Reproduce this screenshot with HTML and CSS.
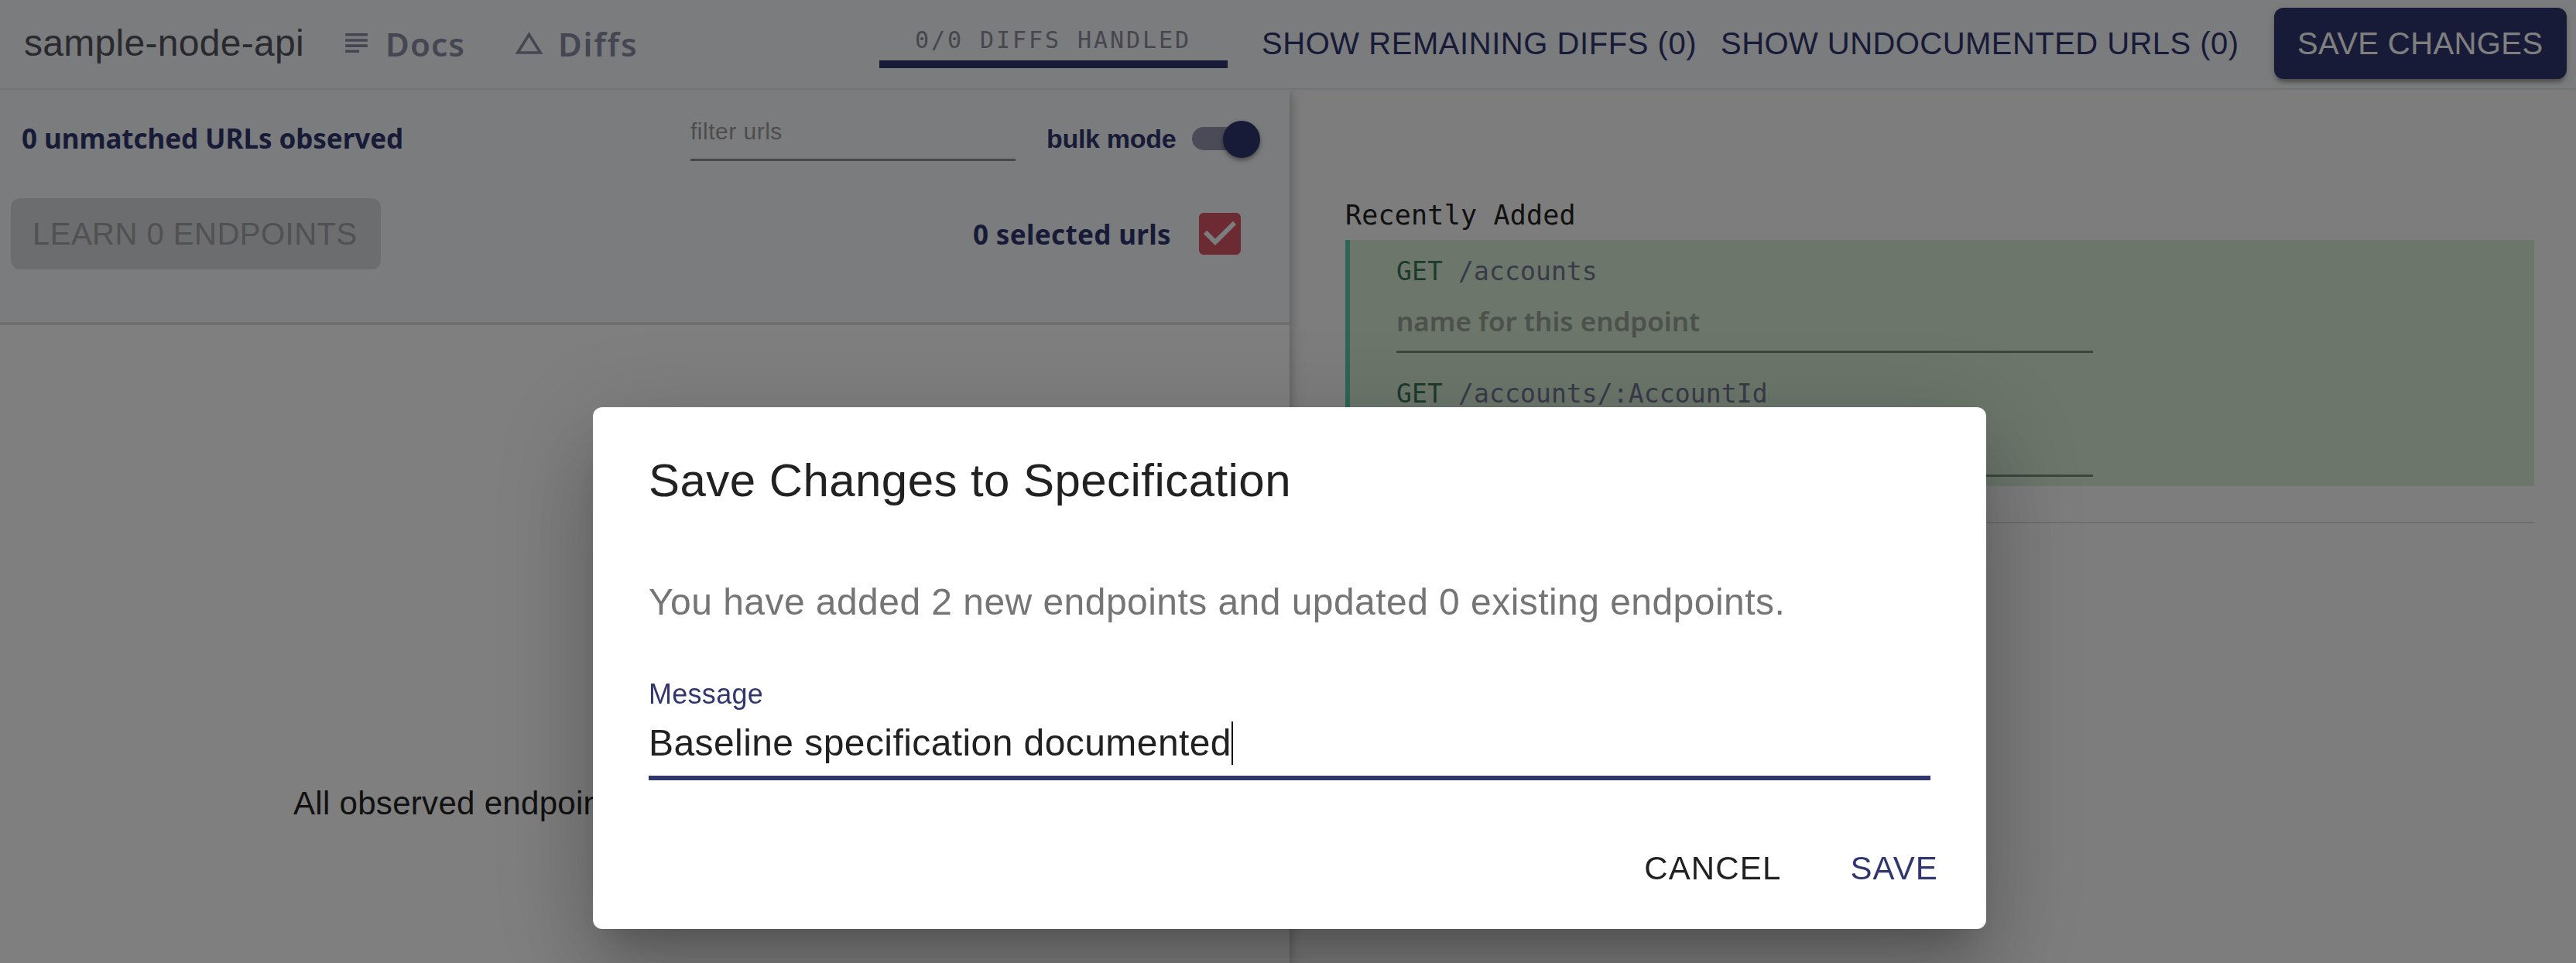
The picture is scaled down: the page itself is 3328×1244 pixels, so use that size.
FILE: index.html
```html
<!DOCTYPE html>
<html lang="en">
<head>
<meta charset="utf-8">
<title>sample-node-api</title>
<link rel="stylesheet" href="styles.css">
</head>
<body>
<div class="app">
  <header class="topbar">
    <div class="project">sample-node-api</div>
    <a class="nav nav-docs">
      <svg class="nav-icon" viewBox="0 0 24 24"><path d="M14 17H4v2h10v-2zm6-8H4v2h16V9zM4 15h16v-2H4v2zM4 5v2h16V5H4z"/></svg>
      <span>Docs</span>
    </a>
    <a class="nav nav-diffs">
      <svg class="nav-icon" viewBox="0 0 24 24"><path d="M12 7.77L18.39 18H5.61L12 7.77M12 4L2 20h20L12 4z"/></svg>
      <span>Diffs</span>
    </a>
    <div class="progress">
      <div class="progress-label">0/0 DIFFS HANDLED</div>
      <div class="progress-bar"></div>
    </div>
    <div class="text-button remaining">SHOW REMAINING DIFFS (0)</div>
    <div class="text-button undocumented">SHOW UNDOCUMENTED URLS (0)</div>
    <div class="save-changes">SAVE CHANGES</div>
  </header>
  <div class="workspace">
    <section class="urls">
      <div class="urls-toolbar">
        <div class="toolbar-row first">
          <div class="heading unmatched">0 unmatched URLs observed</div>
          <div class="filter">filter urls</div>
          <div class="bulk">bulk mode</div>
          <div class="switch"><div class="thumb"></div></div>
        </div>
        <div class="toolbar-row second">
          <div class="learn">LEARN 0 ENDPOINTS</div>
          <div class="heading selected">0 selected urls</div>
          <svg class="checkbox" viewBox="0 0 24 24"><path d="M19 3H5c-1.11 0-2 .9-2 2v14c0 1.1.89 2 2 2h14c1.11 0 2-.9 2-2V5c0-1.1-.89-2-2-2zm-9 14l-5-5 1.41-1.41L10 14.17l7.59-7.59L19 8l-9 9z"/></svg>
        </div>
      </div>
      <p class="empty">All observed endpoints</p>
    </section>
    <section class="changes">
      <h2 class="changes-title">Recently Added</h2>
      <div class="added">
        <div class="endpoint">
          <div class="route"><b>GET</b> /accounts</div>
          <div class="name-field">name for this endpoint</div>
        </div>
        <div class="endpoint">
          <div class="route"><b>GET</b> /accounts/:AccountId</div>
          <div class="name-field"></div>
        </div>
      </div>
      <hr class="divider">
    </section>
  </div>
</div>
<div class="backdrop">
  <div class="dialog">
    <h1 class="dialog-title">Save Changes to Specification</h1>
    <p class="dialog-text">You have added 2 new endpoints and updated 0 existing endpoints.</p>
    <label class="field-label">Message</label>
    <div class="field"><span>Baseline specification documented</span><i class="caret"></i></div>
    <div class="actions"><span class="cancel">CANCEL</span><span class="save">SAVE</span></div>
  </div>
</div>
</body>
</html>
```
FILE: styles.css
```css
* { box-sizing: border-box; }
body { margin: 0; width: 3328px; height: 1244px; overflow: hidden; background: #fafafa; font-family: "Liberation Sans", Arial, sans-serif; color: #222; }
h1, h2, p { margin: 0; font-weight: 400; }
b { font-weight: 400; }
.app { width: 3328px; height: 1244px; white-space: nowrap; }

.topbar { display: flex; align-items: flex-start; height: 116px; background: #f7f8fa; border-bottom: 2px solid #e4e6e9; }
.project { margin-left: 31px; width: 408px; font-size: 48px; line-height: 111px; letter-spacing: .3px; color: #52535f; }
.nav { display: flex; font: 600 42px/114px "Noto Sans", sans-serif; letter-spacing: 1.2px; color: #8b8da6; }
.nav-icon { width: 43px; height: 43px; margin-top: 34px; margin-right: 16px; fill: currentColor; flex: none; }
.nav-docs { width: 223px; }
.nav-diffs { width: 474px; letter-spacing: 1.8px; }
.progress { width: 450px; padding-top: 28px; font: 30px/47px "DejaVu Sans Mono", monospace; letter-spacing: 2.94px; color: #8b8da0; }
.progress-label { height: 50px; padding-left: 46px; }
.progress-bar { height: 10px; background: #31366f; }
.text-button { font-size: 40px; line-height: 112px; letter-spacing: .55px; color: #31366f; }
.remaining { margin-left: 44px; width: 593px; }
.undocumented { width: 715px; letter-spacing: .45px; }
.save-changes { width: 378px; height: 92px; margin-top: 10px; border-radius: 12px; background: #31366f; color: #fff; font-size: 40px; line-height: 92px; letter-spacing: .4px; padding-left: 30px; box-shadow: 0 8px 4px -5px rgba(0,0,0,.2), 0 5px 5px rgba(0,0,0,.14), 0 3px 12px rgba(0,0,0,.12); }

.workspace { display: flex; height: 1128px; }
.urls { width: 1666px; background: #fff; box-shadow: 0 5px 10px rgba(0,0,0,.2), 4px 5px 18px rgba(0,0,0,.12); clip-path: inset(0 -60px 0 0); }
.urls-toolbar { height: 304px; background: #f7f8fa; border-bottom: 4px solid #dfdfdf; }
.toolbar-row { display: flex; align-items: flex-start; }
.first { height: 140px; }
.heading { font: 700 35px/48px "Noto Sans", sans-serif; color: #31366f; }
.unmatched { margin: 39px 0 0 28px; width: 864px; letter-spacing: -.06px; }
.filter { width: 420px; height: 92px; padding-top: 33px; font-size: 30px; line-height: 41px; letter-spacing: .5px; color: #9a9a9c; border-bottom: 3px solid #8f8f91; }
.bulk { margin: 39px 0 0 40px; width: 188px; font-size: 34px; line-height: 48px; font-weight: 700; letter-spacing: -.3px; color: #31366f; }
.switch { width: 82px; height: 30px; margin-top: 48px; border-radius: 15px; background: #9496ae; position: relative; }
.thumb { position: absolute; left: 40px; top: -8px; width: 48px; height: 48px; border-radius: 50%; background: #31366f; box-shadow: 0 3px 4px rgba(0,0,0,.3), 0 3px 8px rgba(0,0,0,.15); }
.learn { margin-left: 14px; width: 478px; height: 92px; border-radius: 12px; background: #d9dadc; color: #a2a3a5; font-size: 40px; line-height: 92px; letter-spacing: .5px; padding-left: 28px; }
.selected { margin: 23px 0 0 765px; width: 283px; letter-spacing: .35px; }
.checkbox { width: 72px; height: 72px; margin-top: 10px; fill: #d95566; }
.empty { margin: 593px 0 0 379px; font-size: 42px; line-height: 50px; letter-spacing: .3px; color: #222; }

.changes { width: 1662px; padding: 139px 54px 0 72px; font-family: "DejaVu Sans Mono", monospace; }
.changes-title { height: 55px; font-size: 35px; line-height: 46px; letter-spacing: .2px; }
.added { height: 318px; background: #d8ecd6; border-left: 6px solid #5ccaac; padding-left: 60px; }
.endpoint { width: 900px; height: 160px; padding-top: 17px; }
.endpoint:first-child { height: 158px; }
.route { font-size: 33px; line-height: 47px; height: 60px; letter-spacing: .12px; color: #727690; }
.route b { color: #3a7456; }
.name-field { height: 69px; border-bottom: 3px solid #7e897e; font: 600 35px/50px "Noto Sans", sans-serif; color: #98a398; padding-top: 3px; }
.endpoint:last-child .name-field { height: 71px; }
.divider { height: 2px; border: 0; margin: 46px 0 0; background: #dedede; }

.backdrop { position: fixed; inset: 0; background: rgba(0,0,0,.5); display: flex; align-items: flex-start; padding: 526px 0 0 766px; white-space: nowrap; }
.dialog { width: 1800px; height: 674px; flex: none; border-radius: 12px; background: #fff; padding: 48px 72px 0; color: #212121; box-shadow: 0 33px 45px -21px rgba(0,0,0,.2), 0 72px 114px 9px rgba(0,0,0,.14), 0 27px 138px 24px rgba(0,0,0,.12); }
.dialog-title { font-size: 60px; line-height: 94px; letter-spacing: .44px; }
.dialog-text { margin-top: 75px; font-size: 48px; line-height: 70px; letter-spacing: .45px; color: #757575; }
.field-label { display: block; margin-top: 60px; font-size: 36px; line-height: 48px; letter-spacing: .28px; color: #31366f; }
.field { display: flex; align-items: center; height: 87px; padding-bottom: 4px; font-size: 48px; line-height: 72px; letter-spacing: .42px; border-bottom: 6px solid #31366f; }
.caret { width: 2px; height: 56px; background: #111; }
.actions { display: flex; justify-content: flex-end; gap: 89px; margin: 84px -10px 0 0; font-size: 42px; line-height: 60px; letter-spacing: 1.15px; }
.save { color: #31366f; }
```
